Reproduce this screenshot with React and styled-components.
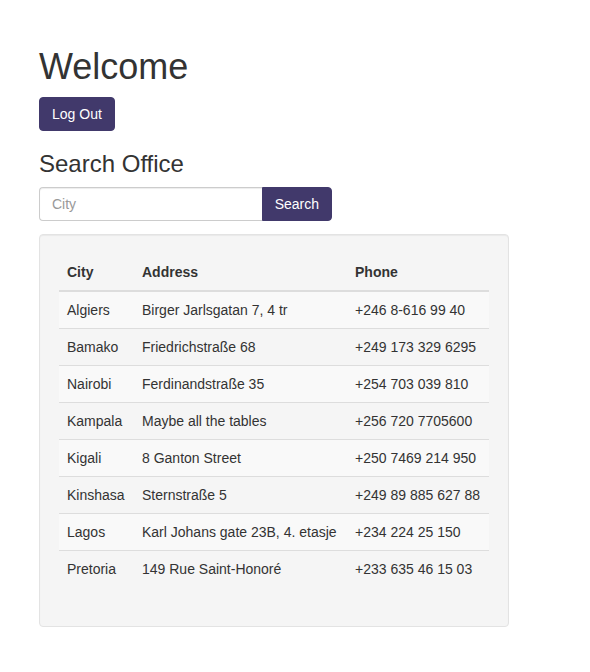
import React from "react";
import styled, { createGlobalStyle } from "styled-components";

const GlobalStyle = createGlobalStyle`
  * { box-sizing: border-box; }
  body {
    margin: 0;
    background: #fff;
    font-family: "Liberation Sans", Arial, sans-serif;
    font-size: 14px;
    line-height: 1.42857;
    color: #333;
  }
`;

const Page = styled.div`
  padding: 27px 39px 40px;
  width: 548px;
`;

const Title = styled.h1`
  font-size: 36px;
  font-weight: 500;
  line-height: 1.1;
  margin: 20px 0 10px;
`;

const Subtitle = styled.h3`
  font-size: 24px;
  font-weight: 500;
  line-height: 1.1;
  margin: 20px 0 10px;
`;

const Button = styled.button`
  display: inline-block;
  height: 34px;
  padding: 6px 12px;
  font-family: inherit;
  font-size: 14px;
  line-height: 20px;
  color: #fff;
  background: #41396b;
  border: 1px solid #41396b;
  border-radius: ${(p) => (p.$attached ? "0 4px 4px 0" : "4px")};
  cursor: pointer;
`;

const InputGroup = styled.div`
  display: flex;
  width: 293px;
  margin-bottom: 13px;
`;

const Input = styled.input`
  flex: 1;
  min-width: 0;
  height: 34px;
  padding: 6px 12px;
  font-family: inherit;
  font-size: 14px;
  color: #555;
  border: 1px solid #ccc;
  border-right: none;
  border-radius: 4px 0 0 4px;
  box-shadow: inset 0 1px 1px rgba(0, 0, 0, 0.075);
  &::placeholder { color: #999; }
`;

const Well = styled.div`
  width: 470px;
  padding: 19px;
  background: #f5f5f5;
  border: 1px solid #e3e3e3;
  border-radius: 4px;
  box-shadow: inset 0 1px 1px rgba(0, 0, 0, 0.05);
`;

const Table = styled.table`
  width: 100%;
  border-collapse: collapse;
  border-spacing: 0;
  margin-bottom: 20px;
`;

const Th = styled.th`
  text-align: left;
  font-weight: bold;
  padding: 8px;
  line-height: 20px;
  border-bottom: 2px solid #ddd;
  width: ${(p) => p.$w}px;
`;

const Row = styled.tr`
  &:nth-child(odd) { background: #f9f9f9; }
`;

const Td = styled.td`
  padding: 8px;
  line-height: 20px;
  border-top: 1px solid #ddd;
  white-space: nowrap;
`;

const offices = [
  ["Algiers", "Birger Jarlsgatan 7, 4 tr", "+246 8-616 99 40"],
  ["Bamako", "Friedrichstraße 68", "+249 173 329 6295"],
  ["Nairobi", "Ferdinandstraße 35", "+254 703 039 810"],
  ["Kampala", "Maybe all the tables", "+256 720 7705600"],
  ["Kigali", "8 Ganton Street", "+250 7469 214 950"],
  ["Kinshasa", "Sternstraße 5", "+249 89 885 627 88"],
  ["Lagos", "Karl Johans gate 23B, 4. etasje", "+234 224 25 150"],
  ["Pretoria", "149 Rue Saint-Honoré", "+233 635 46 15 03"],
];

export default function App() {
  return (
    <>
      <GlobalStyle />
      <Page>
        <Title>Welcome</Title>
        <Button>Log Out</Button>
        <Subtitle>Search Office</Subtitle>
        <InputGroup>
          <Input placeholder="City" />
          <Button $attached>Search</Button>
        </InputGroup>
        <Well>
          <Table>
            <thead>
              <tr>
                <Th $w={75}>City</Th>
                <Th $w={213}>Address</Th>
                <Th $w={142}>Phone</Th>
              </tr>
            </thead>
            <tbody>
              {offices.map(([city, address, phone]) => (
                <Row key={city}>
                  <Td>{city}</Td>
                  <Td>{address}</Td>
                  <Td>{phone}</Td>
                </Row>
              ))}
            </tbody>
          </Table>
        </Well>
      </Page>
    </>
  );
}
